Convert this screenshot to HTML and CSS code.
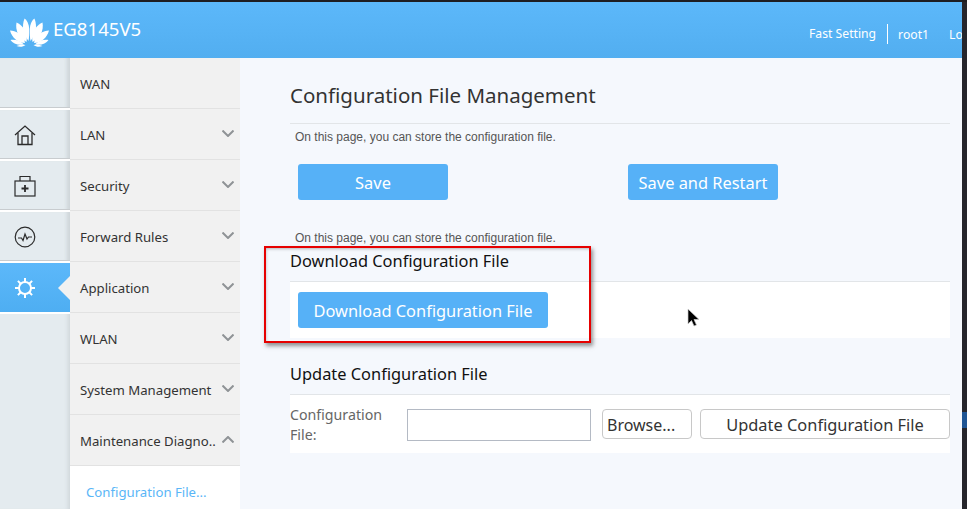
FILE: index.html
```html
<!DOCTYPE html>
<html lang="en">
<head>
<meta charset="utf-8">
<title>Configuration File Management</title>
<link rel="stylesheet" href="styles.css">
</head>
<body>
<div class="screen">
  <div class="window">
    <header class="topbar">
      <div class="brand">
        <svg class="logo" viewBox="0 0 39 30" width="39" height="30" fill="#fff">
          <g id="half">
            <path d="M18.500 24 C13 17 11.500 10 14.500 1.500 C18 4 19.200 9 19.200 13 C19.200 17 19.200 20 18.500 24Z"/>
            <path d="M16.500 25 C9 21 5 14 6.500 5.500 C12 8 15.500 13 16.300 17 C16.800 20 16.900 22 16.500 25Z"/>
            <path d="M15 26 C8 26 2 21 0 13.500 C6 14 11 17 13 20 C14 22 14.700 24 15 26Z"/>
            <path d="M14 27.500 C8 28.500 3 27 0.500 23 C5 22 11 24 14 27.500Z"/>
            <path d="M15.500 28 C13 30 9.500 30.200 6.500 29 C9 27.800 13 27.300 15.500 28Z"/>
          </g>
          <use href="#half" transform="matrix(-1 0 0 1 39 0)"/>
        </svg>
        <span class="model">EG8145V5</span>
      </div>
      <nav class="usernav">
        <span class="fast">Fast Setting</span>
        <span class="user">root1</span>
        <span class="logout">Logout</span>
      </nav>
    </header>
    <div class="body">
      <aside class="rail">
        <div class="rail-item"></div>
        <div class="rail-item">
          <svg viewBox="0 0 22 22" width="22" height="22" fill="none" stroke="#2b2b2b" stroke-width="1.300"><path d="M1 11 L11 2 L21 11"/><path d="M4 9 V20.500 H18 V9"/><path d="M8 20.500 V12 H14 V20.500"/></svg>
        </div>
        <div class="rail-item">
          <svg viewBox="0 0 22 22" width="22" height="22" fill="none" stroke="#2b2b2b" stroke-width="1.200"><rect x="1" y="6" width="20" height="15"/><path d="M6 6 V1.500 H16 V6"/><path d="M11 10 V17 M7.500 13.500 H14.500" stroke-width="1.800"/></svg>
        </div>
        <div class="rail-item">
          <svg viewBox="0 0 22 22" width="22" height="22" fill="none" stroke="#2b2b2b" stroke-width="1.200"><circle cx="11" cy="11" r="9.800"/><path d="M4 12 H7.500 L9 14.500 L11 8 L13 13 L14.500 11 H18"/></svg>
        </div>
        <div class="rail-item rail-active">
          <svg viewBox="0 0 22 22" width="22" height="22" fill="none" stroke="#fff" stroke-width="2"><circle cx="11" cy="11" r="6"/><path d="M11 1 V5 M11 17 V21 M1 11 H5 M17 11 H21 M3.900 3.900 L6.700 6.700 M15.300 15.300 L18.100 18.100 M3.900 18.100 L6.700 15.300 M15.300 6.700 L18.100 3.900"/></svg>
        </div>
      </aside>
      <nav class="menu">
        <div class="menu-item"><span>WAN</span></div>
        <div class="menu-item"><span>LAN</span><svg class="chev" viewBox="0 0 12 7" width="12" height="7"><path d="M0.500 0.500 L6 6 L11.500 0.500"/></svg></div>
        <div class="menu-item"><span>Security</span><svg class="chev" viewBox="0 0 12 7" width="12" height="7"><path d="M0.500 0.500 L6 6 L11.500 0.500"/></svg></div>
        <div class="menu-item"><span>Forward Rules</span><svg class="chev" viewBox="0 0 12 7" width="12" height="7"><path d="M0.500 0.500 L6 6 L11.500 0.500"/></svg></div>
        <div class="menu-item"><span>Application</span><svg class="chev" viewBox="0 0 12 7" width="12" height="7"><path d="M0.500 0.500 L6 6 L11.500 0.500"/></svg></div>
        <div class="menu-item"><span>WLAN</span><svg class="chev" viewBox="0 0 12 7" width="12" height="7"><path d="M0.500 0.500 L6 6 L11.500 0.500"/></svg></div>
        <div class="menu-item"><span>System Management</span><svg class="chev" viewBox="0 0 12 7" width="12" height="7"><path d="M0.500 0.500 L6 6 L11.500 0.500"/></svg></div>
        <div class="menu-item"><span>Maintenance Diagno..</span><svg class="chev" viewBox="0 0 12 7" width="12" height="7"><path d="M0.500 6.500 L6 1 L11.500 6.500"/></svg></div>
        <div class="submenu">Configuration File...</div>
      </nav>
      <main class="content">
        <h1 class="title">Configuration File Management</h1>
        <p class="note note-first">On this page, you can store the configuration file.</p>
        <div class="save-row">
          <button class="btn btn-save">Save</button>
          <button class="btn btn-restart">Save and Restart</button>
        </div>
        <p class="note note-second">On this page, you can store the configuration file.</p>
        <h2 class="section-title">Download Configuration File</h2>
        <div class="panel panel-download">
          <button class="btn btn-download">Download Configuration File</button>
        </div>
        <h2 class="section-title section-update">Update Configuration File</h2>
        <div class="panel panel-update">
          <label class="file-label">Configuration File:</label>
          <input class="file-input" type="text">
          <button class="btn-plain btn-browse">Browse...</button>
          <button class="btn-plain btn-update">Update Configuration File</button>
        </div>
      </main>
    </div>
  </div>
  <div class="desk"><span class="desk-tab"></span></div>
  <div class="redbox"></div>
  <svg class="cursor" viewBox="0 0 13 20" width="13" height="20"><path d="M1 1 V16 L4.500 12.500 L7 18 L9.500 17 L7 11.500 H12 Z" fill="#000" stroke="#ccc" stroke-width="0.700"/></svg>
</div>
</body>
</html>
```

FILE: styles.css
```css
* { box-sizing: border-box; }
html, body { margin: 0; height: 100%; overflow: hidden; }
body { font-family: "Noto Sans", "Open Sans", sans-serif; background: #f5f8fd; }
button, input { font-family: inherit; }

.screen { position: relative; width: 967px; height: 509px; display: flex; padding-top: 2px; background: #1e1e22; overflow: hidden; }
.window { width: 962px; display: flex; flex-direction: column; background: #f5f8fd; overflow: hidden; }
.desk { flex: 1; background: #26262c; display: flex; align-items: flex-start; padding-top: 410px; }
.desk-tab { width: 5px; height: 16px; background: #1f5594; }

.topbar { height: 56px; flex: none; display: flex; align-items: center; justify-content: space-between; color: #fff; background: linear-gradient(#5cb8fa, #52aef0); }
.brand { display: flex; align-items: center; padding-left: 10px; gap: 4px; }
.logo { display: block; margin-top: 3px; }
.model { font-size: 18.600px; line-height: 24px; margin-top: -2px; }
.usernav { display: flex; align-items: center; font-size: 12.200px; white-space: nowrap; width: 153px; overflow: hidden; margin-top: 8px; }
.fast { padding-right: 11px; border-right: 1px solid #fff; line-height: 20px; }
.user { padding-left: 10px; width: 61px; flex: none; }
.logout { flex: none; }

.body { flex: 1; display: flex; min-height: 0; }
.rail { width: 70px; flex: none; background: #e4ebef; box-shadow: inset -5px 0 4px -3px #cfd6da; }
.rail-item { height: 51px; display: flex; align-items: center; justify-content: center; padding-right: 20px; border-bottom: 2px solid #fff; box-shadow: inset 0 -1px 0 #c8cccf, inset -5px 0 4px -3px #cfd6da; }
.rail-item:first-child { height: 52px; }
.rail-item svg { display: block; }
.rail-active { position: relative; background: linear-gradient(#5cb8fa, #4eaef2); box-shadow: none; }
.rail-active::after { content: ""; position: absolute; right: 0; top: 13px; border: 12px solid transparent; border-left-width: 0; border-right-color: #f1f1f1; }

.menu { width: 170px; flex: none; background: #f1f1f1; }
.menu-item { height: 51px; display: flex; align-items: center; justify-content: space-between; padding: 2px 6px 0 10px; font-size: 13.200px; color: #333; border-bottom: 1px solid #e2e2e2; white-space: nowrap; }
.chev { fill: none; stroke: #8f9396; stroke-width: 2; margin-top: -4px; }
.submenu { height: 60px; background: #fff; color: #5ab6f7; font-size: 13.200px; padding: 17px 0 0 16px; }

.content { flex: 1; padding: 0 12px 0 50px; min-width: 0; }
.title { margin: 0; font-size: 20.500px; font-weight: 400; color: #333; line-height: 28px; padding: 23px 0 14px; border-bottom: 1px solid #e2e5e8; }
.note { margin: 0; font-family: "Liberation Sans", Arial, sans-serif; font-size: 12px; color: #555; line-height: 14px; padding-left: 5px; }
.note-first { padding-top: 6px; }
.save-row { display: flex; padding: 20px 0 0 8px; }
.btn { border: 0; border-radius: 3px; background: #56b1f7; color: #fff; font-size: 16.400px; padding: 0; }
.btn-save { width: 150px; height: 36px; }
.btn-restart { width: 150px; height: 36px; margin-left: 180px; }
.note-second { padding-top: 31px; }
.section-title { margin: 0; font-size: 16.400px; font-weight: 400; color: #111; line-height: 22px; padding: 5px 0 9px; border-bottom: 1px solid #e2e5e8; }
.panel { background: #fff; display: flex; align-items: center; }
.panel-download { height: 56px; align-items: flex-start; padding: 10px 0 0 8px; }
.btn-download { width: 250px; height: 36px; }
.section-update { padding-top: 25px; }
.panel-update { height: 58px; }
.file-label { width: 117px; flex: none; font-size: 14.200px; line-height: 20px; color: #666; padding: 2px 30px 0 0; }
.file-input { width: 184px; height: 32px; flex: none; margin-top: 1px; border: 1px solid #b4bac4; background: #fff; padding: 0; }
.btn-plain { height: 30px; border: 1px solid #c8c8c8; border-radius: 4px; background: #fff; color: #333; font-size: 16.400px; padding: 0; }
.btn-browse { width: 90px; margin-left: 11px; padding: 2px 0 0 4px; text-align: left; font-size: 16px; }
.btn-update { width: 250px; margin-left: 8px; }

.redbox { position: absolute; left: 264px; top: 246px; width: 327px; height: 97px; border: 2px solid #e60000; box-shadow: 2px 3px 4px rgba(60, 60, 60, 0.55), inset 2px 3px 3px -2px rgba(60, 60, 60, 0.35); }
.cursor { position: absolute; left: 687px; top: 308px; }
```
